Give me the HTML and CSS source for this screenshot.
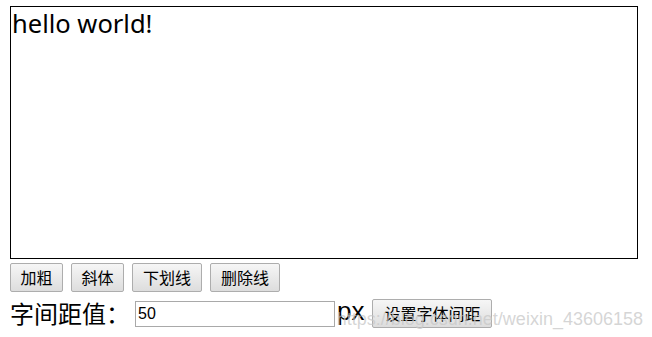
FILE: index.html
```html
<!DOCTYPE html>
<html lang="zh-CN">
<head>
<meta charset="utf-8">
<title>字间距</title>
<link rel="stylesheet" href="styles.css">
</head>
<body>
<div class="page">
  <div class="editor">hello world!</div>
  <div class="toolbar">
    <button class="btn btn-short">加粗</button>
    <button class="btn btn-short">斜体</button>
    <button class="btn btn-long">下划线</button>
    <button class="btn btn-long">删除线</button>
  </div>
  <div class="spacing-row">
    <span class="label">字间距值：</span>
    <input class="value-input" type="text" value="50">
    <span class="unit">px</span>
    <button class="btn btn-set">设置字体间距</button>
  </div>
</div>
<div class="watermark">https://blog.csdn.net/weixin_43606158</div>
</body>
</html>
```
FILE: styles.css
```css
html, body {
  margin: 0;
  padding: 0;
  background: #ffffff;
}
body {
  font-family: "Liberation Sans", "Noto Sans CJK SC", sans-serif;
  color: #000;
  position: relative;
  width: 652px;
  height: 337px;
  overflow: hidden;
}
.page {
  padding: 6px 0 0 10px;
}
.editor {
  box-sizing: border-box;
  width: 628px;
  height: 253px;
  border: 1px solid #000;
  font-family: "Noto Sans", "Noto Sans CJK SC", sans-serif;
  font-size: 25.5px;
  line-height: 32px;
  padding: 0 0 0 1px;
}
.toolbar {
  display: flex;
  gap: 8px;
  margin-top: 4px;
  height: 29px;
}
.btn {
  box-sizing: border-box;
  height: 29px;
  padding: 0;
  border: 1px solid #adadad;
  border-radius: 2px;
  background: linear-gradient(#f6f6f6, #dddddd);
  font-family: "Noto Sans CJK SC", sans-serif;
  font-size: 16px;
  line-height: 27px;
  color: #000;
  margin: 0;
  text-align: center;
}
.btn-short {
  width: 53px;
}
.btn-long {
  width: 70px;
}
.spacing-row {
  display: flex;
  align-items: center;
  margin-top: 4px;
  height: 34px;
}
.label {
  font-family: "Noto Sans CJK SC", sans-serif;
  font-size: 24px;
  line-height: 34px;
  margin-right: 5px;
}
.value-input {
  box-sizing: border-box;
  width: 200px;
  height: 26px;
  margin: 2px 0 0 0;
  padding: 0 2px;
  border: 1px solid #a9a9a9;
  font-family: "Liberation Sans", sans-serif;
  font-size: 16px;
  color: #000;
}
.unit {
  font-family: "Liberation Sans", sans-serif;
  font-size: 26px;
  line-height: 34px;
  margin: 0 8px 0 2px;
  position: relative;
  top: -2px;
}
.btn-set {
  width: 120px;
  margin-top: 1px;
}
.watermark {
  position: absolute;
  right: 9px;
  top: 309px;
  font-family: "Liberation Sans", sans-serif;
  font-size: 18px;
  line-height: 20px;
  color: rgba(200, 200, 200, 0.75);
  pointer-events: none;
  white-space: nowrap;
}
```
